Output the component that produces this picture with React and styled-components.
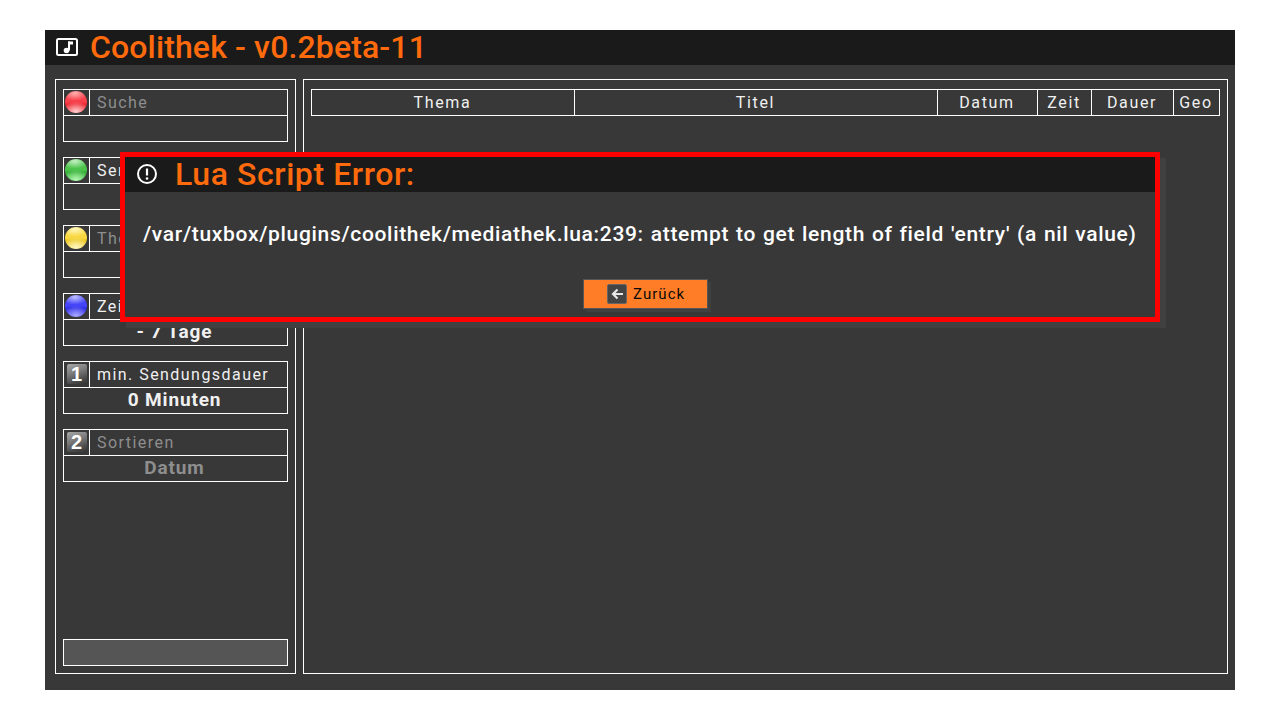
import React from 'react';
import styled, { createGlobalStyle } from 'styled-components';

const GlobalStyle = createGlobalStyle`
    body {
        margin: 0;
        background: #fff;
        font-family: Roboto, 'Liberation Sans', sans-serif;
    }
`;

const Page = styled.div`
    width: 1280px;
    height: 720px;
    padding: 30px 45px;
    box-sizing: border-box;
    overflow: hidden;
`;

const Window = styled.div`
    position: relative;
    height: 660px;
    background: #383838;
    display: flex;
    flex-direction: column;
`;

const TitleBar = styled.div`
    height: 35px;
    flex: none;
    background: #1a1a1a;
    display: flex;
    align-items: center;
    padding-left: 11px;
    gap: 12px;
`;

const Title = styled.div`
    color: #ff6a0d;
    font-size: 32px;
    font-weight: 500;
    letter-spacing: 0.13px;
    line-height: 35px;
    margin-top: -1px;
`;

const Main = styled.div`
    flex: 1;
    min-height: 0;
    display: flex;
    gap: 7px;
    padding: 14px 7px 16px 10px;
`;

const Panel = styled.div`
    border: 1px solid #fff;
    box-sizing: border-box;
`;

const LeftPanel = styled(Panel)`
    width: 241px;
    padding: 9px 7px 7px;
    display: flex;
    flex-direction: column;
    gap: 15px;
`;

const RightPanel = styled(Panel)`
    width: 925px;
    padding: 9px 7px;
`;

const Field = styled.div`
    height: 53px;
    border: 1px solid #fff;
    box-sizing: border-box;
    display: flex;
    flex-direction: column;
`;

const FieldHead = styled.div`
    height: 26px;
    flex: none;
    display: flex;
    border-bottom: 1px solid #fff;
    box-sizing: border-box;
`;

const FieldIcon = styled.div`
    width: 26px;
    flex: none;
    border-right: 1px solid #fff;
    box-sizing: border-box;
    display: flex;
    align-items: center;
    justify-content: center;
`;

const Ball = styled.div`
    width: 22px;
    height: 22px;
    margin: -1px 1px 0 0;
    border-radius: 50%;
    background:
        radial-gradient(ellipse 62% 46% at 50% 94%, ${(p) => p.$glow} 0%, transparent 100%),
        radial-gradient(ellipse 60% 34% at 45% 10%, ${(p) => p.$top} 0%, transparent 100%),
        linear-gradient(180deg, ${(p) => p.$mid} 0%, ${(p) => p.$mid} 50%, ${(p) => p.$low} 60%, ${(p) => p.$mid} 100%);
`;

const KeyCap = styled.div`
    width: 20px;
    height: 20px;
    margin-top: -1px;
    border-radius: 2px;
    background: linear-gradient(160deg, #a8a8a8 0%, #7c7c7c 40%, #4c4c4c 75%, #333 100%);
    color: #fff;
    font-family: 'Liberation Sans', sans-serif;
    font-size: 20px;
    font-weight: 700;
    line-height: 20px;
    text-align: center;
`;

const FieldLabel = styled.div`
    padding-left: 7px;
    font-size: 16px;
    letter-spacing: 1.45px;
    line-height: 25px;
    white-space: nowrap;
    color: ${(p) => (p.$muted ? '#8e8e8e' : '#f0f0f0')};
`;

const FieldValue = styled.div`
    flex: 1;
    padding-right: 2px;
    text-align: center;
    font-size: 19px;
    font-weight: 700;
    letter-spacing: 0.85px;
    line-height: 23px;
    color: ${(p) => (p.$muted ? '#8e8e8e' : '#f0f0f0')};
`;

const Spacer = styled.div`
    flex: 1;
`;

const StatusBar = styled.div`
    height: 27px;
    flex: none;
    background: #555;
    border: 1px solid #fff;
    box-sizing: border-box;
`;

const TableHead = styled.div`
    height: 27px;
    border: 1px solid #fff;
    box-sizing: border-box;
    display: flex;
`;

const Column = styled.div`
    width: ${(p) => p.$width}px;
    flex: none;
    box-sizing: border-box;
    border-right: 1px solid #fff;
    padding-right: 1px;
    text-align: center;
    color: #f0f0f0;
    font-size: 16px;
    letter-spacing: 1.65px;
    line-height: 25px;

    &:last-child {
        border-right: 0;
    }
`;

const Dialog = styled.div`
    position: absolute;
    left: 75px;
    top: 122px;
    width: 1040px;
    height: 170px;
    box-sizing: border-box;
    border: 5px solid #f00;
    background: #383838;
    box-shadow: 6px 6px 0 #404040;
    display: flex;
    flex-direction: column;
`;

const DialogHead = styled.div`
    height: 35px;
    flex: none;
    background: #1a1a1a;
    display: flex;
    align-items: center;
    padding-left: 12px;
    gap: 18px;
`;

const DialogTitle = styled.div`
    color: #ff6a0d;
    font-size: 32px;
    font-weight: 500;
    letter-spacing: 0.57px;
    line-height: 35px;
    margin-top: -1px;
`;

const Message = styled.div`
    padding: 28px 0 0 18px;
    color: #fff;
    font-size: 21px;
    font-weight: 500;
    letter-spacing: 0.68px;
    word-spacing: 1px;
    line-height: 28px;
    white-space: nowrap;
`;

const BackButton = styled.div`
    align-self: center;
    margin: 31px 0 0 11px;
    width: 125px;
    height: 30px;
    box-sizing: border-box;
    background: #ff7d26;
    border: 1px solid #555;
    box-shadow: 3px 3px 0 #404040;
    display: flex;
    align-items: center;
    padding-left: 23px;
    gap: 6px;
    color: #0a0a0a;
    font-size: 15px;
    letter-spacing: 1.05px;
`;

const ArrowBox = styled.div`
    width: 20px;
    height: 20px;
    box-sizing: border-box;
    border: 1px solid #666;
    border-radius: 2px;
    background: #444;
    display: flex;
    align-items: center;
    justify-content: center;
`;

const NoteIcon = () => (
    <svg width="22" height="18" viewBox="0 0 22 18" style={{ marginTop: -1 }}>
        <rect x="1" y="1" width="20" height="16" rx="1.5" fill="none" stroke="#fff" strokeWidth="2" />
        <path d="M13 3.5v9" fill="none" stroke="#fff" strokeWidth="2" />
        <path d="M12 3.5h5v3h-5z" fill="#fff" />
        <circle cx="10.5" cy="12.5" r="2.8" fill="#fff" />
    </svg>
);

const AlertIcon = () => (
    <svg width="20" height="20" viewBox="0 0 20 20" style={{ marginTop: -2 }}>
        <circle cx="10" cy="10" r="9" fill="none" stroke="#fff" strokeWidth="2" />
        <path d="M10 4.5v7" stroke="#fff" strokeWidth="2.2" />
        <circle cx="10" cy="14.5" r="1.3" fill="#fff" />
    </svg>
);

const ArrowIcon = () => (
    <svg width="13" height="12" viewBox="0 0 13 12">
        <path d="M12 6H3M6.5 1.5L2 6l4.5 4.5" fill="none" stroke="#e6e6e6" strokeWidth="2.2" />
    </svg>
);

const balls = {
    red: { $top: '#ffb0b0', $mid: '#f8404a', $low: '#ec2630', $glow: '#ffd0d0' },
    green: { $top: '#c4f0c4', $mid: '#4cc44c', $low: '#34ac34', $glow: '#b4f8b4' },
    yellow: { $top: '#fff8c0', $mid: '#f8d840', $low: '#ecc824', $glow: '#fff8c4' },
    blue: { $top: '#c0c0ff', $mid: '#4444f8', $low: '#2c2ce4', $glow: '#a8a8ff' }
};

const fields = [
    { ball: 'red', label: 'Suche', muted: true },
    { ball: 'green', label: 'Sender' },
    { ball: 'yellow', label: 'Thema', muted: true },
    { ball: 'blue', label: 'Zeitraum', value: '- 7 Tage' },
    { key: '1', label: 'min. Sendungsdauer', value: '0 Minuten' },
    { key: '2', label: 'Sortieren', value: 'Datum', muted: true }
];

const columns = [
    { name: 'Thema', width: 263 },
    { name: 'Titel', width: 363 },
    { name: 'Datum', width: 100 },
    { name: 'Zeit', width: 54 },
    { name: 'Dauer', width: 82 },
    { name: 'Geo', width: 45 }
];

const App = () => (
    <Page>
        <GlobalStyle />
        <Window>
            <TitleBar>
                <NoteIcon />
                <Title>Coolithek - v0.2beta-11</Title>
            </TitleBar>
            <Main>
                <LeftPanel>
                    {fields.map((f) => (
                        <Field key={f.label}>
                            <FieldHead>
                                <FieldIcon>
                                    {f.ball ? <Ball {...balls[f.ball]} /> : <KeyCap>{f.key}</KeyCap>}
                                </FieldIcon>
                                <FieldLabel $muted={f.muted}>{f.label}</FieldLabel>
                            </FieldHead>
                            <FieldValue $muted={f.muted}>{f.value}</FieldValue>
                        </Field>
                    ))}
                    <Spacer />
                    <StatusBar />
                </LeftPanel>
                <RightPanel>
                    <TableHead>
                        {columns.map((c) => (
                            <Column key={c.name} $width={c.width}>{c.name}</Column>
                        ))}
                    </TableHead>
                </RightPanel>
            </Main>
            <Dialog>
                <DialogHead>
                    <AlertIcon />
                    <DialogTitle>Lua Script Error:</DialogTitle>
                </DialogHead>
                <Message>/var/tuxbox/plugins/coolithek/mediathek.lua:239: attempt to get length of field 'entry' (a nil value)</Message>
                <BackButton>
                    <ArrowBox><ArrowIcon /></ArrowBox>
                    Zurück
                </BackButton>
            </Dialog>
        </Window>
    </Page>
);

export default App;
